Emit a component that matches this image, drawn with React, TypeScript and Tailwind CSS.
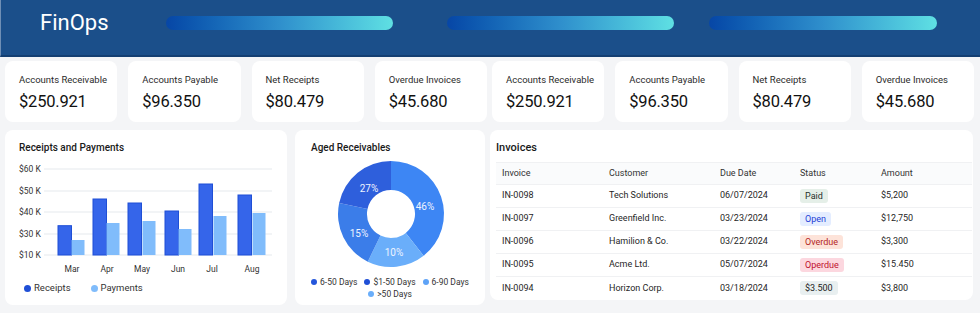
const kpis = [
  { label: "Accounts Receivable", value: "$250.921" },
  { label: "Accounts Payable", value: "$96.350" },
  { label: "Net Receipts", value: "$80.479" },
  { label: "Overdue Invoices", value: "$45.680" },
];

const bars = [
  { m: "Mar", cx: 67, r: [53, 65.7], p: [66, 80] },
  { m: "Apr", cx: 102, r: [88, 39], p: [101, 63] },
  { m: "May", cx: 137, r: [123, 43], p: [137, 61] },
  { m: "Jun", cx: 173, r: [160, 51], p: [173, 69] },
  { m: "Jul", cx: 207, r: [194, 24], p: [208, 56] },
  { m: "Aug", cx: 247, r: [233, 35], p: [247, 53] },
];

const ticks = [
  { t: "$60 K", y: 9 },
  { t: "$50 K", y: 31 },
  { t: "$40 K", y: 52 },
  { t: "$30 K", y: 74 },
  { t: "$10 K", y: 95 },
];

const invoices = [
  { id: "IN-0098", customer: "Tech Solutions", due: "06/07/2024", status: "Paid", cls: "bg-[#e5efe8] text-[#27302a]", amount: "$5,200" },
  { id: "IN-0097", customer: "Greenfield Inc.", due: "03/23/2024", status: "Open", cls: "bg-[#e4edff] text-[#1f3fd6]", amount: "$12,750" },
  { id: "IN-0096", customer: "Hamilion & Co.", due: "03/22/2024", status: "Overdue", cls: "bg-[#fde3d9] text-[#b3261e]", amount: "$3,300" },
  { id: "IN-0095", customer: "Acme Ltd.", due: "05/07/2024", status: "Operdue", cls: "bg-[#fcd7df] text-[#c0102e]", amount: "$15.450" },
  { id: "IN-0094", customer: "Horizon Corp.", due: "03/18/2024", status: "$3.500", cls: "bg-[#e8eff0] text-[#222]", amount: "$3,800" },
];

function arc(cx: number, cy: number, ro: number, ri: number, a0: number, a1: number) {
  const p = (r: number, a: number) => {
    const rad = ((a - 90) * Math.PI) / 180;
    return `${(cx + r * Math.cos(rad)).toFixed(2)} ${(cy + r * Math.sin(rad)).toFixed(2)}`;
  };
  const large = a1 - a0 > 180 ? 1 : 0;
  return `M ${p(ro, a0)} A ${ro} ${ro} 0 ${large} 1 ${p(ro, a1)} L ${p(ri, a1)} A ${ri} ${ri} 0 ${large} 0 ${p(ri, a0)} Z`;
}

function KpiGroup() {
  return (
    <div className="grid w-[482px] grid-cols-4 gap-[11px]">
      {kpis.map((k) => (
        <div key={k.label} className="h-[61px] rounded-lg bg-white pl-[14px] pr-[4px] pt-[13px]">
          <div className="whitespace-nowrap text-[9.5px] leading-[12px] text-[#2b2b2b]">{k.label}</div>
          <div className="mt-[6px] text-[16.5px] leading-[20px] tracking-[-0.2px] text-[#111]">{k.value}</div>
        </div>
      ))}
    </div>
  );
}

function ReceiptsChart() {
  return (
    <div className="h-[175px] w-[282px] rounded-lg bg-white pt-[12px]">
      <div className="pl-[14px] text-[10px] font-medium leading-[12px] text-[#1a1a1a]">Receipts and Payments</div>
      <svg width="282" height="118" className="mt-[6px] block">
        {ticks.map((t) => (
          <g key={t.t}>
            <line x1="39" x2="267" y1={t.y} y2={t.y} stroke="#eef0f3" strokeWidth="1.5" />
            <text x="14" y={t.y + 3} fontSize="8.5" fill="#333">{t.t}</text>
          </g>
        ))}
        {bars.map((b) => (
          <g key={b.m}>
            <rect x={b.r[0]} y={b.r[1]} width="13.5" height={95 - b.r[1]} fill="#3565ea" stroke="#1f4fd6" strokeWidth="1" />
            <rect x={b.p[0] + 0.5} y={b.p[1]} width="13" height={95 - b.p[1]} fill="#80bcfb" />
            <text x={b.cx} y="112" fontSize="8.5" fill="#333" textAnchor="middle">{b.m}</text>
          </g>
        ))}
      </svg>
      <div className="mt-[4px] flex items-center pl-[19px] text-[9.5px] leading-[12px] text-[#333]">
        <span className="mr-[3px] h-[7px] w-[7px] rounded-full bg-[#1f4fd6]" />
        <span>Receipts</span>
        <span className="ml-[20px] mr-[3px] h-[7px] w-[7px] rounded-full bg-[#80bcfb]" />
        <span>Payments</span>
      </div>
    </div>
  );
}

function AgedReceivables() {
  const segs = [
    { a0: 0, a1: 142, c: "#3d86f4" },
    { a0: 142, a1: 206, c: "#6aaefa" },
    { a0: 206, a1: 282, c: "#3b7de9" },
    { a0: 282, a1: 360, c: "#2e5fdc" },
  ];
  const legend = [
    { t: "6-50 Days", c: "bg-[#2456db]" },
    { t: "$1-50 Days", c: "bg-[#1f4fd6]" },
    { t: "6-90 Days", c: "bg-[#5ea3f7]" },
    { t: ">50 Days", c: "bg-[#6aaefa]" },
  ];
  return (
    <div className="h-[175px] w-[190px] rounded-lg bg-white pt-[12px]">
      <div className="pl-[16px] text-[10px] font-medium leading-[12px] text-[#1a1a1a]">Aged Receivables</div>
      <svg width="190" height="120" className="block">
        {segs.map((s) => (
          <path key={s.a0} d={arc(96, 60, 53, 24, s.a0, s.a1)} fill={s.c} />
        ))}
        <g fontSize="10" fill="#eef4ff" textAnchor="middle">
          <text x="74" y="38">27%</text>
          <text x="130" y="56">46%</text>
          <text x="64" y="83">15%</text>
          <text x="99" y="102">10%</text>
        </g>
      </svg>
      <div className="mt-[2px] flex flex-wrap justify-center gap-x-[7px] px-[10px] text-[8.5px] leading-[12px] text-[#333]">
        {legend.map((l) => (
          <div key={l.t} className="flex items-center">
            <span className={`mr-[3px] h-[6px] w-[6px] rounded-full ${l.c}`} />
            {l.t}
          </div>
        ))}
      </div>
    </div>
  );
}

function InvoicesTable() {
  const cols = "grid grid-cols-[107px_111px_80px_81px_1fr] items-center pl-[6px]";
  return (
    <div className="h-[170px] w-[483px] rounded-lg bg-white pl-[6px] pr-[1px] pt-[12px]">
      <div className="text-[11px] font-medium leading-[12px] text-[#1a1a1a]">Invoices</div>
      <div className="mt-[8px] text-[9px] text-[#1f1f1f]">
        <div className={`${cols} h-[23px] border-y border-[#f0f1f3] bg-[#fafbfc] text-[#333]`}>
          <span>Invoice</span>
          <span>Customer</span>
          <span>Due Date</span>
          <span>Status</span>
          <span>Amount</span>
        </div>
        {invoices.map((r) => (
          <div key={r.id} className={`${cols} h-[23px] border-b border-[#f0f1f3] last:border-b-0`}>
            <span>{r.id}</span>
            <span>{r.customer}</span>
            <span>{r.due}</span>
            <span>
              <span className={`inline-block rounded-[3px] px-[5px] leading-[14px] ${r.cls}`}>{r.status}</span>
            </span>
            <span>{r.amount}</span>
          </div>
        ))}
      </div>
    </div>
  );
}

export default function App() {
  return (
    <div className="h-[313px] w-[980px] overflow-hidden bg-[#f4f5f7] font-['Roboto',sans-serif]">
      <header className="flex h-[57px] items-center border-b-2 border-l border-[#143f72] border-l-[#6f8fb5] bg-[#1b4f8a] pb-[10px]">
        <div className="ml-[39px] w-[126px] text-[22px] text-white">FinOps</div>
        <div className="flex">
          <div className="h-[14px] w-[227px] rounded-full bg-gradient-to-r from-[#0746a6] via-[#2f8fcc] to-[#5fe0e3]" />
          <div className="ml-[54px] h-[14px] w-[227px] rounded-full bg-gradient-to-r from-[#0746a6] via-[#2f8fcc] to-[#5fe0e3]" />
          <div className="ml-[35px] h-[14px] w-[228px] rounded-full bg-gradient-to-r from-[#0746a6] via-[#2f8fcc] to-[#5fe0e3]" />
        </div>
      </header>
      <div className="flex gap-[5px] px-[5px] pt-[4px]">
        <KpiGroup />
        <KpiGroup />
      </div>
      <div className="mt-[8px] flex items-start px-[5px]">
        <ReceiptsChart />
        <div className="ml-[8px]">
          <AgedReceivables />
        </div>
        <div className="ml-[5px]">
          <InvoicesTable />
        </div>
      </div>
    </div>
  );
}
